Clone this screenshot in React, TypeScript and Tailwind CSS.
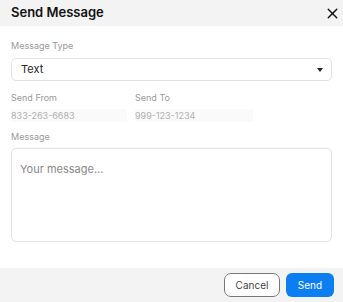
import { X } from 'lucide-react';

export default function App() {
  return (
    <div className="w-[343px] h-[302px] bg-white flex flex-col font-['Inter',sans-serif]">
      {/* header */}
      <div className="h-[26px] bg-[#f3f3f3] flex items-center justify-between pl-[11px] pr-[2px]">
        <h2 className="text-[13px] font-semibold text-[#111]">Send Message</h2>
        <X size={17} strokeWidth={2} className="text-[#111]" />
      </div>

      {/* body */}
      <div className="flex-1 px-[11px] pt-[14px]">
        <label className="block text-[9px] leading-[11px] text-[#999]">Message Type</label>
        <div className="mt-[7px] h-[23px] rounded-[5px] border border-[#e2e2e2] flex items-center justify-between pl-[9px] pr-[8px]">
          <span className="text-[11px] text-[#222]">Text</span>
          <svg width="6" height="4" viewBox="0 0 6 4">
            <path d="M0 0 L6 0 L3 4 Z" fill="#222" />
          </svg>
        </div>

        <div className="mt-[11px] grid grid-cols-[124px_118px]">
          <div>
            <div className="text-[9px] leading-[11px] text-[#999]">Send From</div>
            <div className="mt-[6px] h-[13px] mr-[8px] bg-[#fafafa] text-[9px] leading-[13px] text-[#b0b0b0]">
              833-263-6683
            </div>
          </div>
          <div>
            <div className="text-[9px] leading-[11px] text-[#999]">Send To</div>
            <div className="mt-[6px] h-[13px] bg-[#fafafa] text-[9px] leading-[13px] text-[#b0b0b0]">
              999-123-1234
            </div>
          </div>
        </div>

        <label className="mt-[9px] block text-[9px] leading-[11px] text-[#999]">Message</label>
        <div className="mt-[6px] h-[94px] rounded-[5px] border border-[#e2e2e2] px-[8px] pt-[6px]">
          <span className="text-[11px] text-[#888]">Your message...</span>
        </div>
      </div>

      {/* footer */}
      <div className="h-[34px] bg-[#f3f3f3] flex items-center justify-end gap-[6px] pr-[9px]">
        <button className="w-[56px] h-[24px] rounded-[7px] border border-[#777] bg-white text-[10px] text-[#444]">
          Cancel
        </button>
        <button className="w-[48px] h-[24px] rounded-[6px] bg-[#0b7ff2] text-[10px] text-white">
          Send
        </button>
      </div>
    </div>
  );
}
